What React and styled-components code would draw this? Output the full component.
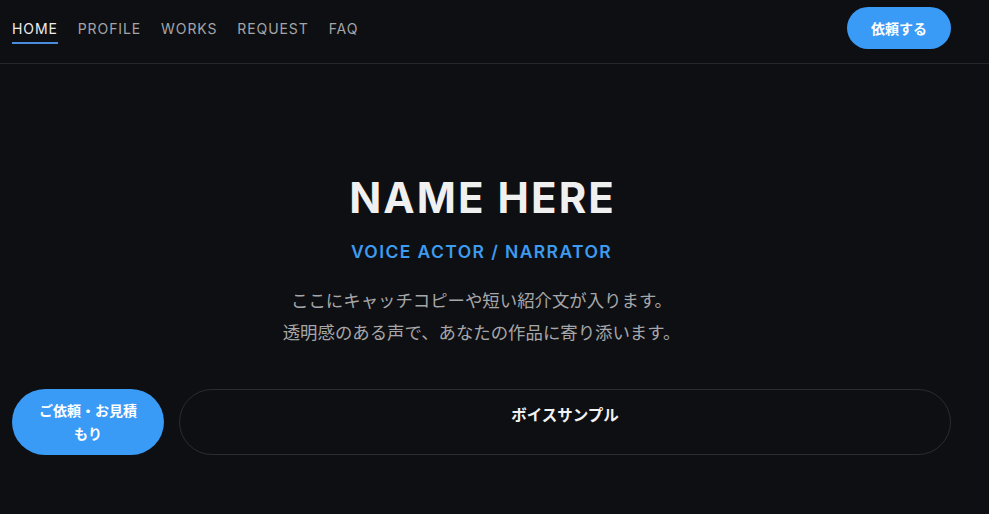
import React from "react";
import styled, { createGlobalStyle } from "styled-components";

const Global = createGlobalStyle`
  html, body { margin: 0; padding: 0; background: #0e0f12; }
  body { font-family: "Inter", "Noto Sans CJK JP", sans-serif; color: #e8e8e8; }
  * { box-sizing: border-box; }
`;

const Page = styled.div`
  min-height: 514px;
  background: #0e0f12;
`;

const Nav = styled.header`
  height: 64px;
  padding: 7px 38px 0 12px;
  display: flex;
  align-items: flex-start;
  justify-content: space-between;
  border-bottom: 1px solid #26272b;
`;

const Links = styled.nav`
  display: flex;
  gap: 20px;
  margin-top: 11px;
`;

const NavLink = styled.a`
  font-size: 14px;
  line-height: 21px;
  font-weight: 400;
  letter-spacing: 0.9px;
  padding-bottom: 3px;
  color: ${(p) => (p.$active ? "#ececec" : "#a4a5a8")};
  border-bottom: 2px solid ${(p) => (p.$active ? "#4a8ddd" : "transparent")};
  text-decoration: none;
  cursor: pointer;
`;

const PillButton = styled.button`
  height: 42px;
  padding: 0 24px;
  border: none;
  border-radius: 21px;
  background: #3a9bf6;
  color: #fff;
  font-family: inherit;
  font-size: 14px;
  font-weight: 700;
`;

const Hero = styled.main`
  padding: 109px 38px 0 12px;
  display: flex;
  flex-direction: column;
  align-items: center;
`;

const Title = styled.h1`
  margin: 0;
  font-size: 42px;
  line-height: 50px;
  font-weight: 700;
  letter-spacing: 0.05em;
  color: #f0f0f0;
  padding-left: 0.05em;
`;

const Subtitle = styled.p`
  margin: 16px 0 0;
  font-size: 17.5px;
  line-height: 25px;
  font-weight: 600;
  letter-spacing: 0.08em;
  color: #3d9bf0;
`;

const Lead = styled.p`
  margin: 21px 0 0;
  font-size: 17.4px;
  line-height: 32px;
  color: #a6a7aa;
  text-align: center;
`;

const Actions = styled.div`
  align-self: stretch;
  margin-top: 40px;
  display: flex;
  gap: 15px;
  align-items: stretch;
`;

const PrimaryAction = styled.button`
  width: 152px;
  flex-shrink: 0;
  min-height: 66px;
  padding: 10px 26px;
  border: none;
  border-radius: 33px;
  background: #3a9bf6;
  color: #fff;
  font-family: inherit;
  font-size: 14px;
  line-height: 23px;
  font-weight: 700;
  display: flex;
  align-items: center;
  justify-content: center;
  text-align: center;
`;

const GhostAction = styled.button`
  flex: 1;
  padding: 14px 20px;
  border: 1px solid #2b2c30;
  border-radius: 33px;
  background: transparent;
  color: #f2f2f2;
  font-family: inherit;
  font-size: 15.5px;
  line-height: 24px;
  font-weight: 700;
  display: flex;
  align-items: flex-start;
  justify-content: center;
`;

const links = ["HOME", "PROFILE", "WORKS", "REQUEST", "FAQ"];

export default function App() {
  return (
    <Page>
      <Global />
      <Nav>
        <Links>
          {links.map((l, i) => (
            <NavLink key={l} $active={i === 0}>
              {l}
            </NavLink>
          ))}
        </Links>
        <PillButton>依頼する</PillButton>
      </Nav>
      <Hero>
        <Title>NAME HERE</Title>
        <Subtitle>VOICE ACTOR / NARRATOR</Subtitle>
        <Lead>
          ここにキャッチコピーや短い紹介文が入ります。
          <br />
          透明感のある声で、あなたの作品に寄り添います。
        </Lead>
        <Actions>
          <PrimaryAction>ご依頼・お見積もり</PrimaryAction>
          <GhostAction>ボイスサンプル</GhostAction>
        </Actions>
      </Hero>
    </Page>
  );
}
